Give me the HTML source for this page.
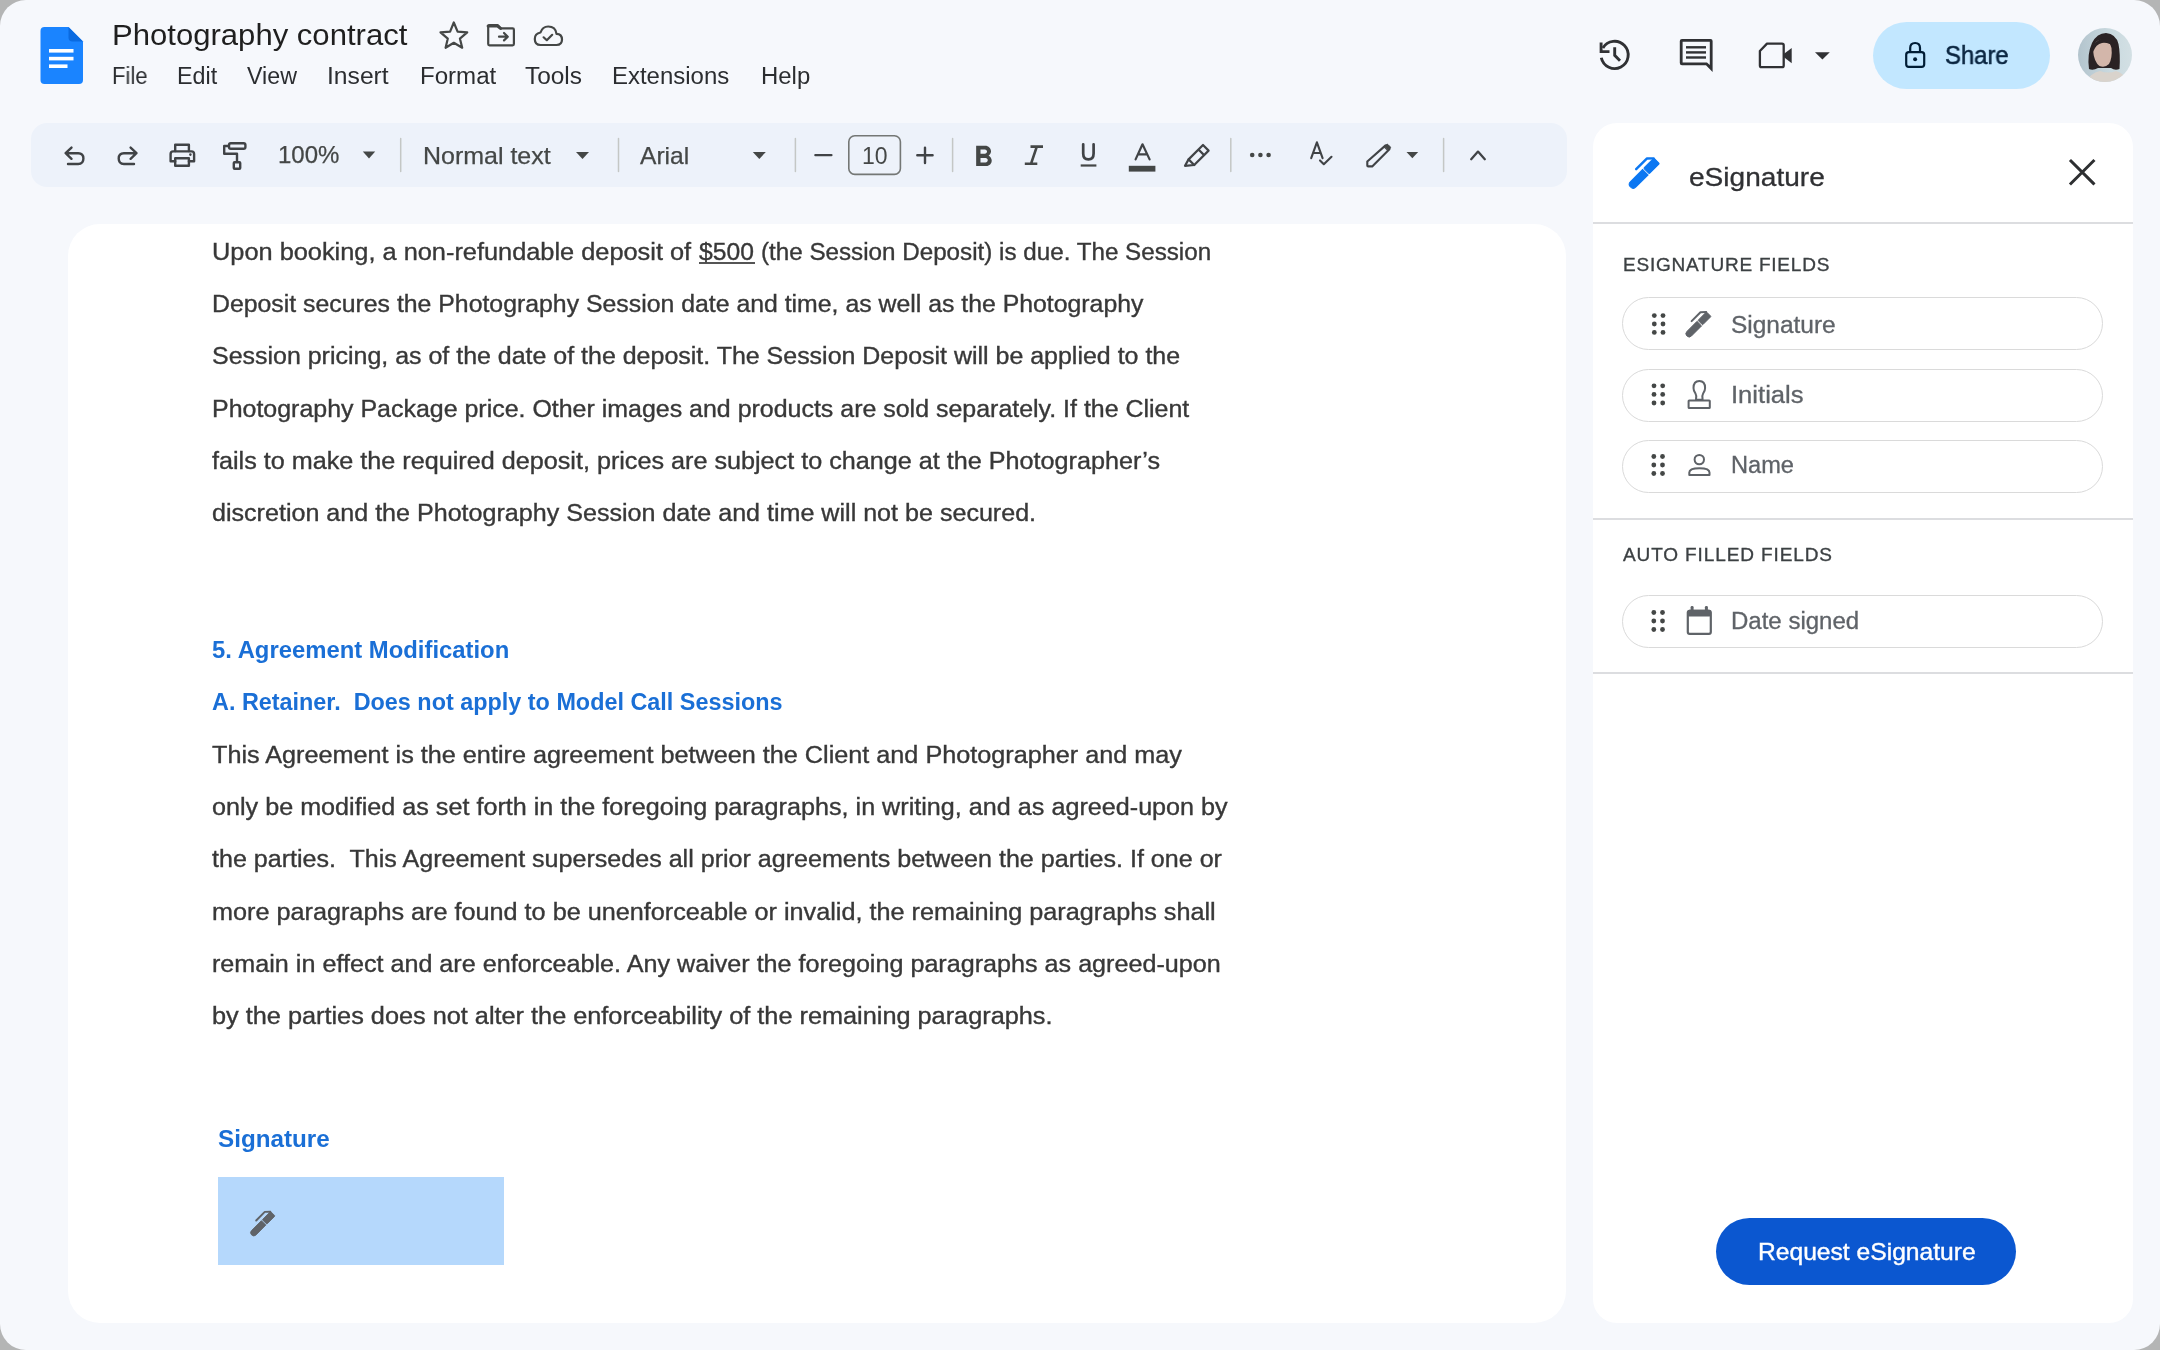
<!DOCTYPE html>
<html><head><meta charset="utf-8"><title>Photography contract</title>
<style>
html,body{margin:0;padding:0;width:2160px;height:1350px;overflow:hidden;background:#b4b5b5;}
#frame{position:absolute;left:0;top:0;width:2160px;height:1350px;border-radius:26px;background:#f6f8fc;overflow:hidden;}
.t{position:absolute;white-space:pre;line-height:1;font-family:"Liberation Sans",sans-serif;will-change:transform;}
.abs{position:absolute;}
svg{position:absolute;overflow:visible;}
</style></head><body>
<div id="frame">
<!-- panels -->
<div class="abs" style="left:31px;top:123px;width:1536px;height:64px;border-radius:16px;background:#edf2fa;"></div>
<div class="abs" style="left:68px;top:224px;width:1498px;height:1099px;border-radius:32px;background:#ffffff;"></div>
<div class="abs" style="left:1593px;top:123px;width:540px;height:1200px;border-radius:24px;background:#ffffff;"></div>

<!-- share pill -->
<div class="abs" style="left:1873px;top:22px;width:177px;height:67px;border-radius:34px;background:#c2e7ff;"></div>

<!-- sidebar dividers -->
<div class="abs" style="left:1593px;top:222px;width:540px;height:2px;background:#dcdde0;"></div>
<div class="abs" style="left:1593px;top:518px;width:540px;height:2px;background:#dcdde0;"></div>
<div class="abs" style="left:1593px;top:672px;width:540px;height:2px;background:#dcdde0;"></div>

<!-- field pills -->
<div class="abs" style="left:1622px;top:297px;width:479px;height:51px;border:1.5px solid #dadada;border-radius:27px;"></div>
<div class="abs" style="left:1622px;top:368.5px;width:479px;height:51px;border:1.5px solid #dadada;border-radius:27px;"></div>
<div class="abs" style="left:1622px;top:439.5px;width:479px;height:51px;border:1.5px solid #dadada;border-radius:27px;"></div>
<div class="abs" style="left:1622px;top:594.5px;width:479px;height:51px;border:1.5px solid #dadada;border-radius:27px;"></div>

<!-- request button -->
<div class="abs" style="left:1716px;top:1218px;width:300px;height:67px;border-radius:34px;background:#0b57d0;"></div>

<!-- signature box -->
<div class="abs" style="left:218px;top:1177px;width:286px;height:88px;background:#b5d8fc;"></div>

<!-- $500 underline -->
<div class="abs" style="left:699px;top:262px;width:56px;height:1.5px;background:#555;"></div>

<!-- docs logo -->
<svg style="left:0;top:0" width="2160" height="1350" viewBox="0 0 2160 1350">
  <path d="M44.5 27 H68.5 L83 41.5 V80 Q83 84 79 84 H44.5 Q40.5 84 40.5 80 V31 Q40.5 27 44.5 27 Z" fill="#1a84ff"/>
  <path d="M68.5 27 L83 41.5 H72.5 Q68.5 41.5 68.5 37.5 Z" fill="#0a6ae0"/>
  <rect x="49" y="49" width="24.5" height="3.6" fill="#fff"/>
  <rect x="49" y="56.8" width="24.5" height="3.6" fill="#fff"/>
  <rect x="49" y="64.4" width="18.5" height="3.6" fill="#fff"/>
</svg>

<!-- header icons: star, folder, cloud -->
<svg style="left:0;top:0" width="2160" height="1350" viewBox="0 0 2160 1350" fill="none" stroke="#444746" stroke-width="2.2" stroke-linejoin="round" stroke-linecap="round">
  <path d="M453.8 22.5 L457.6 31.6 L467.2 32.3 L459.9 38.6 L462.2 47.8 L453.8 42.8 L445.6 47.8 L447.8 38.6 L440.5 32.3 L450.1 31.6 Z"/>
  <path d="M488.2 27 V44 Q488.2 45.3 489.5 45.3 H512.6 Q513.9 45.3 513.9 44 V29.7 Q513.9 28.4 512.6 28.4 H500.5 L497.7 25.2 H489.5 Q488.2 25.2 488.2 26.5 Z"/>
  <path d="M488.2 26 H497.7 L500.5 28.4" stroke-width="3.2"/>
  <path d="M499 36.7 H507.5 M504 33 L507.8 36.7 L504 40.4" stroke-width="2.2"/>
  <path d="M540.5 45 H556.5 Q562 45 562 39.5 Q562 34 556.5 33.8 Q555.5 26.5 548.2 26.5 Q542.5 26.5 540.5 32.5 Q534.8 33.5 534.8 39 Q534.8 45 540.5 45 Z"/>
  <path d="M543.6 37.3 L546.8 40.2 L552.2 34.8" stroke-width="2.2"/>
</svg>

<!-- right header icons -->
<svg style="left:0;top:0" width="2160" height="1350" viewBox="0 0 2160 1350" fill="none" stroke="#303134" stroke-width="2.9">
  <path d="M1601.3 57.8 A13.6 13.6 0 1 0 1602.9 48"/>
  <path d="M1601.1 42.4 V51.6 H1609.5" stroke-linecap="butt"/>
  <path d="M1614.7 47.2 V55.4 L1620 60.7"/>
</svg>
<svg style="left:0;top:0" width="2160" height="1350" viewBox="0 0 2160 1350">
  <path d="M1682 39 H1710.5 Q1712.6 39 1712.6 41 V72 L1706 65.2 H1682 Q1679.8 65.2 1679.8 63 V41 Q1679.8 39 1682 39 Z M1682.6 41.8 V62.4 H1707 L1709.8 65 V41.8 Z" fill="#303134" fill-rule="evenodd"/>
  <rect x="1686" y="46.1" width="20" height="2.4" fill="#303134"/>
  <rect x="1686" y="51.2" width="20" height="2.4" fill="#303134"/>
  <rect x="1686" y="56.3" width="20" height="2.4" fill="#303134"/>
  <path d="M1767 43.6 H1782 Q1783.7 43.6 1783.7 45.3 V65.5 Q1783.7 67.2 1782 67.2 H1761.6 Q1759.9 67.2 1759.9 65.5 V51 Z" fill="none" stroke="#303134" stroke-width="2.3" stroke-linejoin="round"/>
  <path d="M1783.7 54 L1791.7 47.9 V63.3 L1783.7 57 Z" fill="#303134"/>
  <path d="M1815 52.3 H1829.8 L1822.4 59.6 Z" fill="#303134"/>
  <!-- lock -->
  <rect x="1906.2" y="52.1" width="18" height="14.7" rx="2.6" fill="none" stroke="#001d35" stroke-width="2.2"/>
  <path d="M1910.2 52 V48 Q1910.2 43 1915.1 43 Q1920 43 1920 48 V52" fill="none" stroke="#001d35" stroke-width="2.2"/>
  <circle cx="1915.1" cy="59.3" r="2" fill="#001d35"/>
</svg>

<!-- avatar -->
<svg style="left:2077.5px;top:27.8px" width="54" height="54" viewBox="0 0 54 54">
  <defs>
    <clipPath id="avc"><circle cx="27" cy="27" r="27"/></clipPath>
    <linearGradient id="avbg" x1="0" y1="0" x2="1" y2="0"><stop offset="0" stop-color="#b3c4cd"/><stop offset="0.6" stop-color="#c9d9df"/><stop offset="1" stop-color="#d3e0e4"/></linearGradient>
  </defs>
  <g clip-path="url(#avc)">
    <rect width="54" height="54" fill="url(#avbg)"/>
    <path d="M11 41 Q9 26 14 15 Q19 5 28 5 Q38 6 40.5 16 Q42.5 26 41.5 41 Q37 43 33 40 L20 40 Q15 43 11 41 Z" fill="#2a2224"/>
    <path d="M15 22 Q16 12 24 11.5 Q32 11.5 33.5 20 Q34.5 30 31 36 Q27 40 21.5 38 Q16 34 15 22 Z" fill="#d3b6aa"/>
    <path d="M14 19 Q20 9 30 10 Q36 12 37 20 Q31 14 24 15 Q18 16 15 24 Z" fill="#2a2224"/>
    <path d="M6 58 Q10 46 22 43 Q30 46 38 43 Q48 46 52 58 Z" fill="#d9d3cc"/>
  </g>
</svg>

<!-- toolbar icons -->
<svg style="left:0;top:0" width="2160" height="1350" viewBox="0 0 2160 1350" fill="none" stroke="#404346" stroke-width="2.4" stroke-linecap="round" stroke-linejoin="round">
  <!-- undo -->
  <path d="M71.5 147.6 L65.6 153.2 L71.5 158.8 M65.8 153.2 H78.2 Q83.4 153.2 83.4 158.6 Q83.4 164 78.2 164 H68"/>
  <!-- redo -->
  <path d="M130.6 147.6 L136.5 153.2 L130.6 158.8 M136.3 153.2 H123.9 Q118.7 153.2 118.7 158.6 Q118.7 164 123.9 164 H134"/>
  <!-- print -->
  <path d="M175.2 151 V144.7 H188.9 V151"/>
  <path d="M175.2 161.2 H170.6 V154 Q170.6 151.4 173.2 151.4 H191.4 Q194.1 151.4 194.1 154 V161.2 H188.9"/>
  <rect x="175.2" y="158.2" width="13.7" height="7.5"/>
  <circle cx="190.4" cy="154.6" r="0.6" fill="#444746" stroke-width="1.4"/>
  <!-- paint roller -->
  <rect x="229" y="143.3" width="16.4" height="5.4" rx="1.8"/>
  <path d="M229 146 H224.2 V153.8 H237 V161.5"/>
  <rect x="233.8" y="162.2" width="6.4" height="6.6" rx="0.8"/>
  <!-- minus / plus -->
  <path d="M815.4 155.1 H831.4 M917.3 155.3 H932.6 M925 147.6 V163" stroke-width="2.4"/>
  <!-- font size box -->
  <rect x="848.8" y="135.8" width="51.6" height="38.6" rx="6" stroke="#747775" stroke-width="1.6"/>
  <!-- underline U -->
  <path d="M1083.2 144.3 V153.5 Q1083.2 159.4 1088.4 159.4 Q1093.6 159.4 1093.6 153.5 V144.3" stroke-width="2.7"/>
  <!-- A text color -->
  <path d="M1135.6 159.4 L1142.5 144.3 L1149.6 159.4 M1138 154.4 H1147.2" stroke-width="2.2"/>
  <!-- highlighter -->
  <path d="M1203 145 L1208.6 150.6 L1194.2 165 L1188.6 159.4 Z M1198.5 149.5 L1204.1 155.1" stroke-width="2.2"/>
  <path d="M1188.6 159.4 L1185 165.8 L1194.2 165 " stroke-width="2.2"/>
  <!-- separators -->
  <path d="M400.7 138.5 V171.5 M618.5 138.5 V171.5 M795.4 138.5 V171.5 M952.6 138.5 V171.5 M1230.8 138.5 V171.5 M1443.6 138.5 V171.5" stroke="#c4c7c5" stroke-width="1.5"/>
  <!-- spellcheck -->
  <path d="M1311.2 158.2 L1316.9 142.3 L1322.6 158.2 M1313.3 153 H1320.6" stroke-width="2.1"/>
  <path d="M1320 160.4 L1323.8 164.2 L1331.5 156.8" stroke-width="2.1"/>
  <!-- pencil -->
  <path d="M1385.6 145.4 L1389.4 149.2 L1372.2 166.4 L1368.2 166.4 Q1367.3 166.4 1367.3 165.5 V161.5 Z" stroke-width="2.1"/>
  <path d="M1384.2 146.8 L1386.4 144.6 Q1387.2 143.8 1388 144.6 L1390.2 146.8 Q1391 147.6 1390.2 148.4 L1388 150.6 Z" fill="#444746" stroke-width="1"/>
  <!-- chevron up -->
  <path d="M1471.2 159.2 L1478 151.6 L1484.8 159.2" stroke-width="2.3"/>
</svg>
<svg style="left:0;top:0" width="2160" height="1350" viewBox="0 0 2160 1350" fill="#444746">
  <!-- carets -->
  <path d="M362.8 151.5 H375.2 L369 158.4 Z"/>
  <path d="M576 152 H589 L582.5 159 Z"/>
  <path d="M752.8 152 H765.8 L759.3 159 Z"/>
  <path d="M1406.5 152 H1418.2 L1412.35 158.2 Z"/>
  <!-- more dots -->
  <circle cx="1252.2" cy="155" r="2.3"/>
  <circle cx="1260.4" cy="155" r="2.3"/>
  <circle cx="1268.6" cy="155" r="2.3"/>
  <!-- A color bar -->
  <rect x="1128.8" y="165.8" width="26.6" height="5.8"/>
  <!-- underline bar -->
  <rect x="1080.7" y="164.4" width="15.7" height="2.2"/>
</svg>
<!-- bold B -->
<svg style="left:965.8px;top:139.6px" width="34.8" height="34.8" viewBox="0 0 24 24" fill="#444746">
  <path d="M15.6 10.79c.97-.67 1.65-1.77 1.65-2.79 0-2.26-1.75-4-4-4H7v14h7.04c2.09 0 3.71-1.7 3.71-3.79 0-1.52-.86-2.82-2.15-3.42zM10 6.5h3c.83 0 1.5.67 1.5 1.5s-.67 1.5-1.5 1.5h-3v-3zm3.5 9H10v-3h3.5c.83 0 1.5.67 1.5 1.5s-.67 1.5-1.5 1.5z"/>
</svg>
<!-- italic I -->
<svg style="left:0;top:0" width="2160" height="1350" viewBox="0 0 2160 1350" fill="none" stroke="#444746" stroke-width="2.6" stroke-linecap="butt">
  <path d="M1030.5 146.6 H1043 M1024.8 163.8 H1037.3 M1036.8 146.6 L1031 163.8"/>
</svg>

<!-- pen symbol -->
<svg style="display:none" width="0" height="0">
  <defs>
    <g id="pen">
      <path d="M0 0 Q0 -3.9 3.9 -3.9 H21 V3.9 H3.9 Q0 3.9 0 0 Z"/>
      <rect x="22.6" y="-3.9" width="14.4" height="7.8" rx="0.8"/>
      <path d="M36.6 -3.9 L31.6 -8.6 H16.6" fill="none" stroke-width="2.4" stroke-linecap="round" stroke-linejoin="round"/>
    </g>
  </defs>
</svg>
<svg style="left:0;top:0" width="2160" height="1350" viewBox="0 0 2160 1350">
  <use href="#pen" fill="#0b77f2" stroke="#0b77f2" transform="translate(1630.5 187) rotate(-45)"/>
  <use href="#pen" fill="#5f6368" stroke="#5f6368" transform="translate(1686.9 336) scale(0.835) rotate(-45)"/>
  <use href="#pen" fill="#5f6368" stroke="#5f6368" transform="translate(251.6 1234.9) scale(0.81) rotate(-45)"/>
  <!-- close X -->
  <path d="M2071 161 L2093.4 183.4 M2093.4 161 L2071 183.4" stroke="#2d2f31" stroke-width="3" stroke-linecap="square"/>
  <!-- drag dots -->
  <g fill="#444746">
    <circle cx="1654.3" cy="315.6" r="2.4"/><circle cx="1663" cy="315.6" r="2.4"/>
    <circle cx="1654.3" cy="324" r="2.4"/><circle cx="1663" cy="324" r="2.4"/>
    <circle cx="1654.3" cy="332.4" r="2.4"/><circle cx="1663" cy="332.4" r="2.4"/>

    <circle cx="1654" cy="385.8" r="2.4"/><circle cx="1662.7" cy="385.8" r="2.4"/>
    <circle cx="1654" cy="394.4" r="2.4"/><circle cx="1662.7" cy="394.4" r="2.4"/>
    <circle cx="1654" cy="403" r="2.4"/><circle cx="1662.7" cy="403" r="2.4"/>

    <circle cx="1653.8" cy="456.5" r="2.4"/><circle cx="1662.5" cy="456.5" r="2.4"/>
    <circle cx="1653.8" cy="465" r="2.4"/><circle cx="1662.5" cy="465" r="2.4"/>
    <circle cx="1653.8" cy="473.5" r="2.4"/><circle cx="1662.5" cy="473.5" r="2.4"/>

    <circle cx="1653.8" cy="612.5" r="2.4"/><circle cx="1662.5" cy="612.5" r="2.4"/>
    <circle cx="1653.8" cy="621" r="2.4"/><circle cx="1662.5" cy="621" r="2.4"/>
    <circle cx="1653.8" cy="629.5" r="2.4"/><circle cx="1662.5" cy="629.5" r="2.4"/>
  </g>
  <g fill="none" stroke="#5f6368" stroke-width="2" stroke-linejoin="round">
    <!-- stamp -->
    <path d="M1693.5 388 Q1693.5 381 1699.3 381 Q1705.1 381 1705.1 388 Q1705.1 391 1703.2 393.3 Q1701.8 395.5 1702.6 399.8 H1696 Q1696.8 395.5 1695.4 393.3 Q1693.5 391 1693.5 388 Z"/>
    <rect x="1688.6" y="400.4" width="21.2" height="7.6" rx="0.6"/>
    <!-- person -->
    <circle cx="1699.3" cy="459.6" r="4.7"/>
    <path d="M1689.3 475 V472.6 Q1689.3 468.2 1699.4 468.2 Q1709.5 468.2 1709.5 472.6 V475 Z"/>
    <!-- calendar -->
    <rect x="1687.8" y="610.8" width="23" height="23" rx="1.8" stroke-width="2.2"/>
  </g>
  <g fill="#5f6368">
    <rect x="1687.8" y="609.8" width="23" height="6.8" rx="1.5"/>
    <rect x="1690.6" y="605.9" width="3" height="5" rx="1.3"/>
    <rect x="1704.9" y="605.9" width="3" height="5" rx="1.3"/>
  </g>
</svg>

<div class="t" style="left:112.00px;top:20px;font-size:30px;color:#1f1f1f;transform:scaleX(1.0357);transform-origin:0 0;">Photography contract</div>
<div class="t" style="left:111.70px;top:65px;font-size:23px;color:#2b2d30;transform:scaleX(0.9595);transform-origin:0 0;">File</div>
<div class="t" style="left:177.20px;top:65px;font-size:23px;color:#2b2d30;transform:scaleX(1.0150);transform-origin:0 0;">Edit</div>
<div class="t" style="left:246.70px;top:65px;font-size:23px;color:#2b2d30;transform:scaleX(1.0100);transform-origin:0 0;">View</div>
<div class="t" style="left:327.20px;top:65px;font-size:23px;color:#2b2d30;transform:scaleX(1.0724);transform-origin:0 0;">Insert</div>
<div class="t" style="left:420.00px;top:65px;font-size:23px;color:#2b2d30;transform:scaleX(1.0466);transform-origin:0 0;">Format</div>
<div class="t" style="left:525.20px;top:65px;font-size:23px;color:#2b2d30;transform:scaleX(1.0611);transform-origin:0 0;">Tools</div>
<div class="t" style="left:612.30px;top:65px;font-size:23px;color:#2b2d30;transform:scaleX(1.0416);transform-origin:0 0;">Extensions</div>
<div class="t" style="left:760.50px;top:65px;font-size:23px;color:#2b2d30;transform:scaleX(1.0404);transform-origin:0 0;">Help</div>
<div class="t" style="left:1944.70px;top:43px;font-size:25px;color:#0a2540;transform:scaleX(0.9537);transform-origin:0 0;-webkit-text-stroke:0.55px #0a2540;">Share</div>
<div class="t" style="left:277.50px;top:143px;font-size:24px;color:#444746;transform:scaleX(0.9951);transform-origin:0 0;-webkit-text-stroke:0.25px #444746;">100%</div>
<div class="t" style="left:423.00px;top:143.5px;font-size:24px;color:#444746;transform:scaleX(1.0407);transform-origin:0 0;-webkit-text-stroke:0.25px #444746;">Normal text</div>
<div class="t" style="left:639.80px;top:143.5px;font-size:24px;color:#444746;transform:scaleX(1.0250);transform-origin:0 0;-webkit-text-stroke:0.25px #444746;">Arial</div>
<div class="t" style="left:862.30px;top:144.7px;font-size:23px;color:#444746;">10</div>
<div class="t" style="left:211.50px;top:241px;font-size:23px;color:#383838;transform:scaleX(1.1021);transform-origin:0 0;-webkit-text-stroke:0.35px #383838;">Upon booking, a non-refundable deposit of</div>
<div class="t" style="left:698.70px;top:241px;font-size:23px;color:#383838;transform:scaleX(1.0725);transform-origin:0 0;-webkit-text-stroke:0.35px #383838;">$500</div>
<div class="t" style="left:761.30px;top:241px;font-size:23px;color:#383838;transform:scaleX(1.0521);transform-origin:0 0;-webkit-text-stroke:0.35px #383838;">(the Session Deposit) is due. The Session</div>
<div class="t" style="left:211.50px;top:293px;font-size:23px;color:#383838;transform:scaleX(1.0793);transform-origin:0 0;-webkit-text-stroke:0.35px #383838;">Deposit secures the Photography Session date and time, as well as the Photography</div>
<div class="t" style="left:211.50px;top:345px;font-size:23px;color:#383838;transform:scaleX(1.0853);transform-origin:0 0;-webkit-text-stroke:0.35px #383838;">Session pricing, as of the date of the deposit. The Session Deposit will be applied to the</div>
<div class="t" style="left:211.50px;top:398px;font-size:23px;color:#383838;transform:scaleX(1.0848);transform-origin:0 0;-webkit-text-stroke:0.35px #383838;">Photography Package price. Other images and products are sold separately. If the Client</div>
<div class="t" style="left:211.50px;top:450px;font-size:23px;color:#383838;transform:scaleX(1.0947);transform-origin:0 0;-webkit-text-stroke:0.35px #383838;">fails to make the required deposit, prices are subject to change at the Photographer’s</div>
<div class="t" style="left:211.50px;top:502px;font-size:23px;color:#383838;transform:scaleX(1.0906);transform-origin:0 0;-webkit-text-stroke:0.35px #383838;">discretion and the Photography Session date and time will not be secured.</div>
<div class="t" style="left:212.00px;top:639px;font-size:23px;color:#1a6fd6;transform:scaleX(1.0369);transform-origin:0 0;font-weight:bold;">5. Agreement Modification</div>
<div class="t" style="left:211.50px;top:691px;font-size:23px;color:#1a6fd6;transform:scaleX(1.0169);transform-origin:0 0;font-weight:bold;">A. Retainer.  Does not apply to Model Call Sessions</div>
<div class="t" style="left:211.50px;top:744px;font-size:23px;color:#383838;transform:scaleX(1.0962);transform-origin:0 0;-webkit-text-stroke:0.35px #383838;">This Agreement is the entire agreement between the Client and Photographer and may</div>
<div class="t" style="left:211.50px;top:796px;font-size:23px;color:#383838;transform:scaleX(1.0942);transform-origin:0 0;-webkit-text-stroke:0.35px #383838;">only be modified as set forth in the foregoing paragraphs, in writing, and as agreed-upon by</div>
<div class="t" style="left:211.50px;top:848px;font-size:23px;color:#383838;transform:scaleX(1.0901);transform-origin:0 0;-webkit-text-stroke:0.35px #383838;">the parties.  This Agreement supersedes all prior agreements between the parties. If one or</div>
<div class="t" style="left:211.50px;top:901px;font-size:23px;color:#383838;transform:scaleX(1.0964);transform-origin:0 0;-webkit-text-stroke:0.35px #383838;">more paragraphs are found to be unenforceable or invalid, the remaining paragraphs shall</div>
<div class="t" style="left:211.50px;top:953px;font-size:23px;color:#383838;transform:scaleX(1.0932);transform-origin:0 0;-webkit-text-stroke:0.35px #383838;">remain in effect and are enforceable. Any waiver the foregoing paragraphs as agreed-upon</div>
<div class="t" style="left:211.50px;top:1005px;font-size:23px;color:#383838;transform:scaleX(1.0993);transform-origin:0 0;-webkit-text-stroke:0.35px #383838;">by the parties does not alter the enforceability of the remaining paragraphs.</div>
<div class="t" style="left:217.80px;top:1128px;font-size:23px;color:#1a6fd6;transform:scaleX(1.0538);transform-origin:0 0;font-weight:bold;">Signature</div>
<div class="t" style="left:1689.00px;top:164px;font-size:26px;color:#303134;transform:scaleX(1.0794);transform-origin:0 0;-webkit-text-stroke:0.3px #303134;">eSignature</div>
<div class="t" style="left:1622.60px;top:255px;font-size:19px;color:#3c4043;letter-spacing:0.775px;-webkit-text-stroke:0.35px #3c4043;">ESIGNATURE FIELDS</div>
<div class="t" style="left:1623.00px;top:544.5px;font-size:19px;color:#3c4043;letter-spacing:0.882px;-webkit-text-stroke:0.35px #3c4043;">AUTO FILLED FIELDS</div>
<div class="t" style="left:1730.60px;top:314px;font-size:23px;color:#5f6368;transform:scaleX(1.0633);transform-origin:0 0;-webkit-text-stroke:0.3px #5f6368;">Signature</div>
<div class="t" style="left:1730.60px;top:384px;font-size:23px;color:#5f6368;transform:scaleX(1.1138);transform-origin:0 0;-webkit-text-stroke:0.3px #5f6368;">Initials</div>
<div class="t" style="left:1730.60px;top:454px;font-size:23px;color:#5f6368;transform:scaleX(1.0262);transform-origin:0 0;-webkit-text-stroke:0.3px #5f6368;">Name</div>
<div class="t" style="left:1730.60px;top:610px;font-size:23px;color:#5f6368;transform:scaleX(1.0439);transform-origin:0 0;-webkit-text-stroke:0.3px #5f6368;">Date signed</div>
<div class="t" style="left:1757.80px;top:1240px;font-size:24px;color:#ffffff;transform:scaleX(1.0259);transform-origin:0 0;-webkit-text-stroke:0.4px #fff;">Request eSignature</div>

</div>
</body></html>
